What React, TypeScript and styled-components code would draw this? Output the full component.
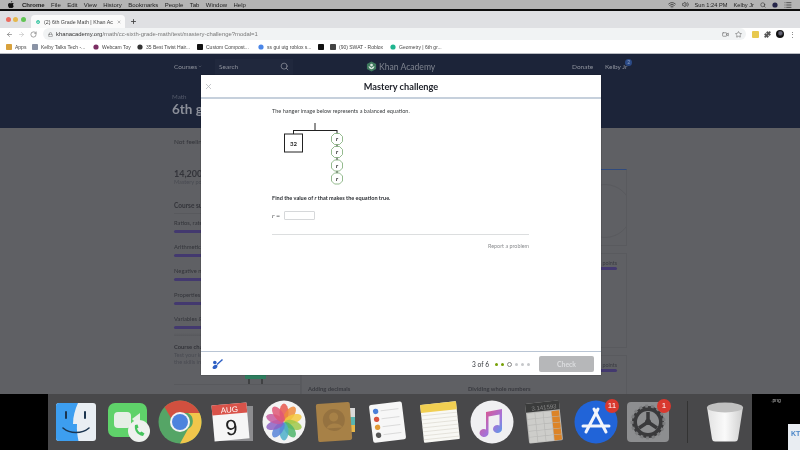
import styled, { createGlobalStyle } from 'styled-components'
import { ArrowLeft, ArrowRight, RotateCw, Lock, Plus, X, Search, Star, Puzzle, Wifi, Volume2, Video, ChevronDown, List } from 'lucide-react'

const GlobalStyle = createGlobalStyle`
  html, body { margin: 0; padding: 0; background: #000; }
  * { box-sizing: border-box; }
`

const Screen = styled.div`
  position: relative;
  width: 800px;
  height: 450px;
  overflow: hidden;
  display: flex;
  flex-direction: column;
  font-family: Lato, 'Liberation Sans', sans-serif;
  filter: blur(0.45px);
`

const MenuBar = styled.div`
  height: 9px;
  flex: none;
  background: #b4b4b4;
  display: flex;
  align-items: center;
  padding: 0 8px;
  font: 6px 'Liberation Sans', sans-serif;
  color: #222;
  white-space: nowrap;
`

const AppleMark = styled.svg`
  margin-right: 8px;
  flex: none;
`

const MenuItem = styled.span<{ $bold?: boolean }>`
  margin-right: 6.4px;
  font-weight: ${p => (p.$bold ? 700 : 400)};
`

const MenuRight = styled.div`
  margin-left: auto;
  display: flex;
  align-items: center;
  gap: 6px;
  font-size: 5.7px;
`

const BlackStrip = styled.div`
  height: 2px;
  flex: none;
  background: #0c0c0c;
`

const TabStrip = styled.div`
  height: 17px;
  flex: none;
  background: #dfe0e3;
  display: flex;
  align-items: flex-end;
  padding-left: 5.5px;
`

const Light = styled.i<{ $c: string }>`
  width: 5px;
  height: 5px;
  border-radius: 50%;
  background: ${p => p.$c};
  margin: 0 2.5px 6px 0;
`

const Tab = styled.div`
  width: 94px;
  height: 13px;
  margin-left: 3px;
  background: #fafafa;
  border-radius: 4px 4px 0 0;
  display: flex;
  align-items: center;
  padding: 0 4px 0 5px;
  gap: 4px;
  font: 5.3px 'Liberation Sans', sans-serif;
  color: #444;
  white-space: nowrap;
`

const TabTitle = styled.span`
  flex: 1;
`

const NewTab = styled.div`
  margin: 0 0 3px 4.5px;
  color: #444;
  display: flex;
`

const AddressRow = styled.div`
  height: 12px;
  flex: none;
  background: #fff;
  display: flex;
  align-items: center;
  padding: 0 7px 0 6px;
  color: #666;
`

const NavIcons = styled.div`
  width: 37px;
  display: flex;
  gap: 5px;
  flex: none;
`

const Omnibox = styled.div`
  width: 703px;
  height: 12px;
  flex: none;
  border-radius: 6px;
  background: #f1f3f4;
  display: flex;
  align-items: center;
  padding: 0 4px 0 5px;
  font: 5.9px 'Liberation Sans', sans-serif;
  color: #777;
  gap: 3px;
`

const Domain = styled.b`
  color: #333;
  font-weight: 400;
`

const OmniEnd = styled.div`
  margin-left: auto;
  display: flex;
  align-items: center;
  gap: 6px;
  color: #666;
`

const ToolIcons = styled.div`
  display: flex;
  align-items: center;
  margin-left: 6px;
  gap: 5px;
  color: #555;
`

const Extension = styled.i`
  width: 7px;
  height: 7px;
  border-radius: 1px;
  background: #e8c94f;
`

const Avatar = styled.i`
  width: 8px;
  height: 8px;
  border-radius: 50%;
  background: radial-gradient(circle at 55% 40%, #667 0 20%, #111 45%);
`

const Kebab = styled.span`
  font: 7px 'Liberation Sans', sans-serif;
  line-height: 7px;
  color: #666;
`

const Bookmarks = styled.div`
  height: 14px;
  flex: none;
  background: #fff;
  border-bottom: 1px solid #b9bcc2;
  display: flex;
  align-items: center;
  padding-left: 6px;
  font: 5px 'Liberation Sans', sans-serif;
  color: #444;
  white-space: nowrap;
`

const Bookmark = styled.div<{ $w: number }>`
  width: ${p => p.$w}px;
  flex: none;
  display: flex;
  align-items: center;
  gap: 3px;
`

const Nav = styled.div`
  height: 74px;
  flex: none;
  background: #1c2439;
  color: #8e929c;
  padding-left: 174px;
`

const NavRow = styled.div`
  height: 24px;
  display: flex;
  align-items: center;
  font-size: 6.5px;
  padding-top: 1px;
`

const NavLink = styled.span<{ $w?: number }>`
  display: flex;
  align-items: center;
  gap: 1px;
  width: ${p => (p.$w ? `${p.$w}px` : 'auto')};
  flex: none;
`

const SearchBox = styled.div`
  width: 78px;
  height: 16px;
  margin-left: 13px;
  flex: none;
  background: #20283d;
  display: flex;
  align-items: center;
  justify-content: space-between;
  padding: 0 4px;
`

const Logo = styled.div`
  margin-left: 73px;
  width: 206px;
  flex: none;
  display: flex;
  align-items: center;
  gap: 2px;
  font-size: 8.6px;
  color: #7f848f;
`

const UserName = styled.span`
  position: relative;
`

const Badge = styled.i`
  position: absolute;
  top: -4px;
  right: -5px;
  width: 7px;
  height: 7px;
  border-radius: 50%;
  background: #2b4a86;
  color: #8ea0c4;
  font: 5px/7px Lato, sans-serif;
  text-align: center;
`

const Subject = styled.div`
  margin: 15px 0 0 -2px;
  font-size: 6.2px;
  color: #565c6c;
`

const CourseTitle = styled.div`
  margin: 1px 0 0 -2px;
  font-size: 13.5px;
  font-weight: 700;
  color: #8b8f99;
`

const Content = styled.div`
  height: 266px;
  flex: none;
  background: #5f6064;
  padding-left: 174px;
  display: flex;
  overflow: hidden;
  color: #33343a;
  font-size: 5.8px;
`

const Sidebar = styled.div`
  width: 126px;
  flex: none;
  padding-top: 10px;
`

const Ready = styled.div`
  font-size: 6.4px;
  height: 31px;
`

const Points = styled.div`
  font-size: 9px;
  font-weight: 700;
  line-height: 9px;
`

const Muted = styled.div`
  color: #494b52;
  font-size: 5.6px;
  line-height: 7.4px;
`

const SummaryTitle = styled.div`
  margin-top: 17px;
  font-size: 6.5px;
  font-weight: 700;
  padding-bottom: 4px;
  border-bottom: 1px solid #58595d;
`

const UnitRow = styled.div`
  height: 24px;
  padding-top: 5px;
`

const Bar = styled.div`
  height: 3px;
  margin-top: 3.5px;
  border-radius: 2px;
  background: #43396f;
`

const Fade = styled.div`
  height: 3px;
  margin: -1px 0 6.5px;
  background: linear-gradient(#5f6064, #57585c);
`

const ChallengeTitle = styled.div`
  font-weight: 700;
  font-size: 5.8px;
  margin-bottom: 1px;
`

const Trophy = styled.div`
  margin: 9px 0 0 71px;
  display: flex;
`

const SidebarEnd = styled.div`
  border-top: 1px solid #58595d;
`

const Main = styled.div`
  width: 327px;
  flex: none;
  padding-top: 41px;
  border-left: 1px solid #58595d;
`

const Card = styled.div<{ $h: number; $top?: boolean }>`
  height: ${p => p.$h}px;
  border: 1px solid #595a5e;
  border-top: ${p => (p.$top ? '1px solid #2f4a7d' : '1px solid #595a5e')};
  margin-bottom: 7px;
  padding-right: 9px;
  position: relative;
  overflow: hidden;
`

const Dial = styled.i`
  position: absolute;
  right: -6px;
  top: 14px;
  width: 54px;
  height: 54px;
  border-radius: 50%;
  border: 1px solid #595a5e;
`

const PointsLine = styled.div`
  text-align: right;
  margin-top: 6px;
  font-size: 5.4px;
  color: #3a3b42;
`

const PointsBar = styled.div`
  height: 3px;
  margin-top: 1px;
  border-radius: 2px;
  background: #43396f;
`

const LessonRow = styled.div`
  display: grid;
  grid-template-columns: 160px 1fr;
  margin-top: 13px;
  padding-left: 6px;
  font-weight: 700;
  font-size: 5.8px;
  color: #38393f;
`

const Desktop = styled.div`
  flex: 1;
  min-height: 0;
  background: #000;
  display: flex;
`

const DesktopSide = styled.div`
  flex: 1;
  position: relative;
  overflow: hidden;
  color: #bbb;
  font: 5px 'Liberation Sans', sans-serif;
  text-align: center;
  padding-top: 3px;
`

const DocIcon = styled.div`
  position: absolute;
  left: 36px;
  top: 30px;
  width: 30px;
  height: 40px;
  background: #e9edf2;
  clip-path: polygon(0 0, 24px 0, 30px 6px, 100% 100%, 0 100%);
  color: #4a86c8;
  font: 700 7px 'Liberation Sans', sans-serif;
  text-align: left;
  padding: 6px 0 0 3px;
`

const Dock = styled.div`
  width: 704px;
  flex: none;
  background: #48484a;
  display: flex;
  align-items: center;
  padding-left: 6px;
  gap: 8px;
`

const DockIcon = styled.div`
  position: relative;
  width: 44px;
  height: 44px;
  flex: none;
`

const DockBadge = styled.span`
  position: absolute;
  top: -1px;
  right: -1px;
  width: 14px;
  height: 14px;
  border-radius: 50%;
  background: #d8382e;
  color: #fff;
  font: 8px/14px 'Liberation Sans', sans-serif;
  text-align: center;
`

const DockDivider = styled.i`
  width: 1px;
  height: 42px;
  margin: 0 7px 0 9px;
  background: #333;
  flex: none;
`

const Modal = styled.div`
  position: absolute;
  left: 201px;
  top: 75px;
  width: 400px;
  height: 300px;
  background: #fff;
  display: flex;
  flex-direction: column;
  box-shadow: 0 0 1px rgba(0, 0, 0, 0.6);
`

const ModalHeader = styled.div`
  height: 24px;
  flex: none;
  position: relative;
  display: flex;
  align-items: center;
  justify-content: center;
  border-bottom: 2px solid #c6d0dc;
  padding-top: 1px;
  font-size: 9.2px;
  font-weight: 700;
  color: #21242c;
`

const CloseButton = styled.div`
  position: absolute;
  left: 3px;
  top: 7px;
  display: flex;
  color: #b3b5b9;
`

const ModalBody = styled.div`
  flex: 1;
  padding: 9px 72px 0 71px;
  font-size: 5.55px;
  line-height: 7px;
  color: #3b3e40;
`

const Hanger = styled.svg`
  display: block;
  margin-top: 8px;
`

const FindText = styled.div`
  margin-top: 7.5px;
  font-weight: 700;
  color: #2b2e33;
`

const AnswerRow = styled.div`
  margin-top: 9px;
  display: flex;
  align-items: center;
  gap: 4px;
  font-family: 'Liberation Serif', serif;
  font-size: 6.5px;
`

const AnswerInput = styled.div`
  width: 31px;
  height: 9px;
  border: 1px solid #d6d8da;
  border-radius: 1px;
  background: #fff;
`

const Rule = styled.div`
  margin-top: 14.5px;
  border-top: 1px solid #dcdedf;
`

const Report = styled.div`
  margin-top: 8px;
  text-align: right;
  font-size: 5.4px;
  color: #8b8d90;
`

const ModalFooter = styled.div`
  height: 24px;
  flex: none;
  border-top: 1.5px solid #b9c5d4;
  display: flex;
  align-items: center;
  padding: 1px 7px 0 11px;
  font-size: 6.6px;
  color: #33363b;
`

const Progress = styled.div`
  margin-left: auto;
  display: flex;
  align-items: center;
`

const Dots = styled.div`
  display: flex;
  align-items: center;
  gap: 3px;
  margin: 0 9.5px 0 5.5px;
`

const Dot = styled.i<{ $kind: 'done' | 'now' | 'todo' }>`
  width: ${p => (p.$kind === 'now' ? 5 : 3)}px;
  height: ${p => (p.$kind === 'now' ? 5 : 3)}px;
  border-radius: 50%;
  background: ${p => (p.$kind === 'done' ? '#76a005' : p.$kind === 'now' ? '#fff' : '#c6c8cb')};
  border: ${p => (p.$kind === 'now' ? '1px solid #888' : 'none')};
`

const CheckButton = styled.div`
  width: 55px;
  height: 16px;
  border-radius: 2px;
  background: #b6b7b9;
  color: #dcdddf;
  font-size: 6.8px;
  font-weight: 700;
  display: flex;
  align-items: center;
  justify-content: center;
`

const KhanLeaf = ({ size, c = '#14bf96' }: { size: number; c?: string }) => (
  <svg width={size} height={size} viewBox="0 0 12 12">
    <path d="M6 .5 11 3.2v5.6L6 11.5 1 8.8V3.2z" fill={c} />
    <circle cx="6" cy="4.4" r="1.5" fill="#d9e6df" />
    <path d="M2.8 5.4C3 8 4.6 9 6 9s3-1 3.2-3.6C7.8 6 6.6 6.6 6 7.6 5.4 6.6 4.2 6 2.8 5.4z" fill="#d9e6df" />
  </svg>
)

const Fav = ({ c, shape = 'square' }: { c: string; shape?: 'square' | 'round' }) => (
  <svg width="6" height="6" viewBox="0 0 6 6">
    {shape === 'round' ? <circle cx="3" cy="3" r="2.6" fill={c} /> : <rect width="6" height="6" rx="0.8" fill={c} />}
  </svg>
)

const FinderIcon = () => (
  <svg width="44" height="44" viewBox="0 0 44 44">
    <rect x="2" y="3" width="40" height="38" rx="3" fill="#e9eef3" />
    <path d="M5 3h19c-3 7-5 13-5 21h4c-.5 6 .5 12 1.5 17H5a3 3 0 0 1-3-3V6a3 3 0 0 1 3-3z" fill="#3d9ef0" />
    <path d="M12 12v6M31 12v6" stroke="#1b3550" strokeWidth="2" strokeLinecap="round" />
    <path d="M9 28c7 6 19 6 26 0" stroke="#1b3550" strokeWidth="1.6" fill="none" strokeLinecap="round" />
  </svg>
)

const FaceTimeIcon = () => (
  <svg width="44" height="44" viewBox="0 0 44 44">
    <rect x="2" y="3" width="39" height="34" rx="7" fill="#5fd26a" />
    <rect x="8" y="12" width="17" height="16" rx="4" fill="#e6efe6" />
    <path d="M26 19l8-6v14z" fill="#e6efe6" />
    <circle cx="33" cy="31" r="11" fill="#eef1ee" />
    <path d="M29 25c-1 5 2 10 8 11l1.500-2.500-3-2-1.500 1c-1.500-1-2.500-2.500-3-4l1.500-1-1-3z" fill="#44c35c" />
  </svg>
)

const ChromeIcon = () => (
  <svg width="44" height="44" viewBox="0 0 44 44">
    <circle cx="22" cy="22" r="21.500" fill="#55a566" />
    <path d="M22 .5A21.500 21.500 0 0 1 41.500 13H22a9 9 0 0 0-8.500 6L6.500 7A21.500 21.500 0 0 1 22 .5z" fill="#d1503f" />
    <path d="M41.500 13A21.500 21.500 0 0 1 22 43.500L30 29a9 9 0 0 0 0-16z" fill="#f1c64b" />
    <circle cx="22" cy="22" r="10" fill="#f3f3f3" />
    <circle cx="22" cy="22" r="8" fill="#4d83dd" />
  </svg>
)

const CalendarIcon = () => (
  <svg width="44" height="44" viewBox="0 0 44 44">
    <rect x="8" y="6" width="35" height="35" fill="#8d8d90" />
    <g transform="rotate(-5 20 22)">
      <rect x="3" y="4" width="35" height="36" fill="#f6f6f6" />
      <rect x="3" y="4" width="35" height="10" fill="#d9534a" />
      <text x="20.500" y="12.500" textAnchor="middle" fontSize="8" fill="#fff" fontFamily="Liberation Sans">AUG</text>
      <text x="21" y="35" textAnchor="middle" fontSize="22" fill="#222" fontFamily="Liberation Sans">9</text>
    </g>
  </svg>
)

const PhotosIcon = () => {
  const petals = ['#e8574b', '#ef8b3c', '#f3c83e', '#9dc84a', '#4fb56b', '#4dafc9', '#5784d8', '#8c62c4', '#c65aa0', '#df5775']
  return (
    <svg width="44" height="44" viewBox="0 0 44 44">
      <circle cx="22" cy="22" r="21.500" fill="#f3f3f3" />
      {petals.map((c, i) => (
        <ellipse key={c} cx="22" cy="12.500" rx="4.500" ry="9" fill={c} opacity="0.85" transform={`rotate(${i * 36} 22 22)`} />
      ))}
    </svg>
  )
}

const ContactsIcon = () => (
  <svg width="44" height="44" viewBox="0 0 44 44">
    <rect x="36" y="8" width="5" height="9" fill="#d9d9d9" />
    <rect x="36" y="17" width="5" height="8" fill="#58b5b0" />
    <rect x="36" y="25" width="5" height="7" fill="#e6b64a" />
    <g transform="rotate(-4 20 22)">
      <rect x="3" y="3" width="34" height="38" rx="2" fill="#a78147" />
      <circle cx="20" cy="20" r="11" fill="#957240" />
      <circle cx="20" cy="17" r="4.500" fill="#a78147" />
      <path d="M12 28c2-6 14-6 16 0" fill="#a78147" />
    </g>
  </svg>
)

const RemindersIcon = () => (
  <svg width="44" height="44" viewBox="0 0 44 44">
    <g transform="rotate(-7 22 22)">
      <rect x="5" y="3" width="33" height="38" rx="2" fill="#f7f7f7" />
      {['#4a7fd9', '#d9533f', '#e19a35', '#555'].map((c, i) => (
        <g key={c}>
          <circle cx="11" cy={10 + i * 8} r="2.700" fill={c} />
          <path d={`M16 ${10 + i * 8}h18`} stroke="#cfcfcf" strokeWidth="0.7" />
        </g>
      ))}
    </g>
  </svg>
)

const NotesIcon = () => (
  <svg width="44" height="44" viewBox="0 0 44 44">
    <g transform="rotate(-6 22 22)">
      <rect x="4" y="3" width="36" height="38" rx="1" fill="#f8f8f4" />
      <rect x="4" y="3" width="36" height="8" fill="#f1cf52" />
      {[14, 18, 22, 26, 30, 34, 38].map(y => (
        <path key={y} d={`M4 ${y}h36`} stroke="#d8d6cc" strokeWidth="0.6" />
      ))}
    </g>
  </svg>
)

const MusicIcon = () => (
  <svg width="44" height="44" viewBox="0 0 44 44">
    <defs>
      <linearGradient id="note" x1="0" y1="0" x2="1" y2="1">
        <stop offset="0" stopColor="#ee4e77" />
        <stop offset="0.6" stopColor="#a672d8" />
        <stop offset="1" stopColor="#4aa6ec" />
      </linearGradient>
    </defs>
    <circle cx="22" cy="22" r="21.500" fill="#f0f0f2" />
    <path d="M16 12l16-3v20a4.500 4 0 1 1-2.500-3.600V14.500l-11 2V33a4.500 4 0 1 1-2.500-3.600z" fill="url(#note)" />
  </svg>
)

const CalculatorIcon = () => {
  const keys = Array.from({ length: 20 }, (_, i) => i)
  return (
    <svg width="44" height="44" viewBox="0 0 44 44">
      <g transform="rotate(-6 22 22)">
        <rect x="5" y="2" width="34" height="40" rx="1.500" fill="#b8b8b6" />
        <rect x="5" y="2" width="34" height="9" fill="#3a3b3b" />
        <text x="36" y="9.500" textAnchor="end" fontSize="6" fill="#888" fontFamily="Liberation Sans">3.141593</text>
        {keys.map(i => (
          <rect
            key={i}
            x={6 + (i % 4) * 8.200}
            y={12 + Math.floor(i / 4) * 6}
            width="7.500"
            height="5.400"
            fill={i % 4 === 3 ? '#dc8428' : '#cdcdca'}
          />
        ))}
      </g>
    </svg>
  )
}

const AppStoreIcon = () => (
  <svg width="44" height="44" viewBox="0 0 44 44">
    <circle cx="22" cy="22" r="21.500" fill="#2164d8" />
    <path d="M24 9L12 32M20 9l12 23M9 26h26" stroke="#f2f5fb" strokeWidth="3" strokeLinecap="round" fill="none" />
  </svg>
)

const PrefsIcon = () => (
  <svg width="44" height="44" viewBox="0 0 44 44">
    <rect x="1" y="2" width="42" height="40" rx="4" fill="#8d8e90" />
    <circle cx="22" cy="22" r="16" fill="#39393b" />
    <circle cx="22" cy="22" r="16" fill="none" stroke="#7c7d7f" strokeWidth="3" strokeDasharray="3 3" />
    <circle cx="22" cy="22" r="11" fill="#8d8e90" />
    <path d="M22 22V12M22 22l-9 6M22 22l9 6" stroke="#39393b" strokeWidth="3.500" />
    <circle cx="22" cy="22" r="3" fill="#39393b" />
  </svg>
)

const TrashIcon = () => (
  <svg width="44" height="44" viewBox="0 0 44 44">
    <defs>
      <linearGradient id="bin" x1="0" y1="0" x2="1" y2="0">
        <stop offset="0" stopColor="#e2e2e2" />
        <stop offset="0.5" stopColor="#fafafa" />
        <stop offset="1" stopColor="#cfcfcf" />
      </linearGradient>
    </defs>
    <path d="M4 7h36l-5 32a3 3 0 0 1-3 2.500H12A3 3 0 0 1 9 39z" fill="url(#bin)" />
    <ellipse cx="22" cy="7.500" rx="18" ry="5" fill="#c0c0c0" />
  </svg>
)

const menuItems = ['File', 'Edit', 'View', 'History', 'Bookmarks', 'People', 'Tab', 'Window', 'Help']

const bookmarks = [
  { w: 26, c: '#d8a13c', label: 'Apps' },
  { w: 61, c: '#8a93a5', label: 'Kelby Talks Tech -...' },
  { w: 44, c: '#7b2e63', label: 'Webcam Toy', round: true },
  { w: 60, c: '#333', label: '35 Best Twist Hair...', round: true },
  { w: 61, c: '#111', label: 'Custom Compost...' },
  { w: 60, c: '#4a86e8', label: 'ss gui utg roblox s...', round: true },
  { w: 12, c: '#111', label: '' },
  { w: 60, c: '#444', label: '(90) SWAT - Roblox' },
  { w: 60, c: '#1fb58f', label: 'Geometry | 6th gr...', round: true },
]

const units = ['Ratios, rates, & percentages', 'Arithmetic with rational numbers', 'Negative numbers', 'Properties of numbers', 'Variables & expressions']

export default function App() {
  return (
    <Screen>
      <GlobalStyle />
      <MenuBar>
        <AppleMark width="6" height="7" viewBox="0 0 12 14">
          <path d="M8.500 0c.1 1.500-1.200 3-2.700 2.900C5.700 1.500 7 .1 8.500 0zM11.500 10c-.8 2-2 4-3.300 4-1 0-1.300-.6-2.400-.6S4.300 14 3.400 14C1.800 14 0 11 0 8.200 0 5.500 1.700 4 3.300 4c1 0 1.900.7 2.500.7S7.400 3.900 8.700 4c.6 0 2 .2 2.800 1.500-2.300 1.400-1.900 3.900 0 4.500z" fill="#111" />
        </AppleMark>
        <MenuItem $bold>Chrome</MenuItem>
        {menuItems.map(m => (
          <MenuItem key={m}>{m}</MenuItem>
        ))}
        <MenuRight>
          <Wifi size={8} />
          <Volume2 size={7} />
          <span>Sun 1:24 PM</span>
          <span>Kelby Jr</span>
          <Search size={6} />
          <Fav c="#26264a" shape="round" />
          <List size={8} />
        </MenuRight>
      </MenuBar>
      <BlackStrip />
      <TabStrip>
        <Light $c="#ec6a5e" />
        <Light $c="#e5b84b" />
        <Light $c="#61c454" />
        <Tab>
          <KhanLeaf size={6} />
          <TabTitle>(2) 6th Grade Math | Khan Ac</TabTitle>
          <X size={6} />
        </Tab>
        <NewTab>
          <Plus size={7} strokeWidth={3} />
        </NewTab>
      </TabStrip>
      <AddressRow>
        <NavIcons>
          <ArrowLeft size={7} />
          <ArrowRight size={7} color="#bbb" />
          <RotateCw size={7} />
        </NavIcons>
        <Omnibox>
          <Lock size={5} color="#555" />
          <span>
            <Domain>khanacademy.org</Domain>/math/cc-sixth-grade-math/test/mastery-challenge?modal=1
          </span>
          <OmniEnd>
            <Video size={7} />
            <Star size={7} />
          </OmniEnd>
        </Omnibox>
        <ToolIcons>
          <Extension />
          <Puzzle size={7} fill="#555" />
          <Avatar />
          <Kebab>⋮</Kebab>
        </ToolIcons>
      </AddressRow>
      <Bookmarks>
        {bookmarks.map((b, i) => (
          <Bookmark key={i} $w={b.w}>
            <Fav c={b.c} shape={b.round ? 'round' : 'square'} />
            {b.label}
          </Bookmark>
        ))}
      </Bookmarks>
      <Nav>
        <NavRow>
          <NavLink $w={28}>
            Courses <ChevronDown size={5} />
          </NavLink>
          <SearchBox>
            Search
            <Search size={9} />
          </SearchBox>
          <Logo>
            <KhanLeaf size={11} c="#3f7a5e" />
            Khan Academy
          </Logo>
          <NavLink $w={33}>Donate</NavLink>
          <UserName>
            Kelby Jr
            <Badge>2</Badge>
          </UserName>
        </NavRow>
        <Subject>Math</Subject>
        <CourseTitle>6th grade</CourseTitle>
      </Nav>
      <Content>
        <Sidebar>
          <Ready>Not feeling ready?</Ready>
          <Points>14,200</Points>
          <Muted>Mastery points</Muted>
          <SummaryTitle>Course summary</SummaryTitle>
          {units.map(u => (
            <UnitRow key={u}>
              {u}
              <Bar />
            </UnitRow>
          ))}
          <Fade />
          <ChallengeTitle>Course challenge</ChallengeTitle>
          <Muted>Test your knowledge of</Muted>
          <Muted>the skills in this course.</Muted>
          <Trophy>
            <svg width="22" height="9" viewBox="0 0 22 9">
              <path d="M0 0h21v3a1 1 0 0 1-1 1H1a1 1 0 0 1-1-1z" fill="#2e7d5e" />
              <path d="M4 4v5M17 4v5" stroke="#222" strokeWidth="1" />
            </svg>
          </Trophy>
          <SidebarEnd />
        </Sidebar>
        <Main>
          <Card $h={77} $top>
            <Dial />
          </Card>
          <Card $h={95}>
            <PointsLine>points</PointsLine>
            <PointsBar />
          </Card>
          <Card $h={60}>
            <PointsLine>points</PointsLine>
            <PointsBar />
            <LessonRow>
              <span>Adding decimals</span>
              <span>Dividing whole numbers</span>
            </LessonRow>
          </Card>
        </Main>
      </Content>
      <Desktop>
        <DesktopSide />
        <Dock>
          <DockIcon><FinderIcon /></DockIcon>
          <DockIcon><FaceTimeIcon /></DockIcon>
          <DockIcon><ChromeIcon /></DockIcon>
          <DockIcon><CalendarIcon /></DockIcon>
          <DockIcon><PhotosIcon /></DockIcon>
          <DockIcon><ContactsIcon /></DockIcon>
          <DockIcon><RemindersIcon /></DockIcon>
          <DockIcon><NotesIcon /></DockIcon>
          <DockIcon><MusicIcon /></DockIcon>
          <DockIcon><CalculatorIcon /></DockIcon>
          <DockIcon>
            <AppStoreIcon />
            <DockBadge>11</DockBadge>
          </DockIcon>
          <DockIcon>
            <PrefsIcon />
            <DockBadge>1</DockBadge>
          </DockIcon>
          <DockDivider />
          <DockIcon><TrashIcon /></DockIcon>
        </Dock>
        <DesktopSide>
          .png
          <DocIcon>KT</DocIcon>
        </DesktopSide>
      </Desktop>
      <Modal>
        <ModalHeader>
          <CloseButton>
            <X size={9} />
          </CloseButton>
          Mastery challenge
        </ModalHeader>
        <ModalBody>
          The hanger image below represents a balanced equation.
          <Hanger width="80" height="64" viewBox="0 0 80 64">
            <g fill="none" stroke="#222">
              <path d="M43 0v7M21.500 7.500H65M21.500 7v4M65 7v4" strokeWidth="1" />
              <rect x="12.500" y="11" width="18" height="18" strokeWidth="1" />
              <path d="M65 20v4M65 33v4M65 46v4" strokeWidth="1" />
            </g>
            <text x="21.500" y="22.500" textAnchor="middle" fontSize="6" fontWeight="700" fill="#222" fontFamily="Lato">32</text>
            {[16, 29, 42.5, 55.5].map(y => (
              <g key={y}>
                <path
                  d={`M${65 - 2.500} ${y - 5.500}h5l3 3v5l-3 3h-5l-3-3v-5z`}
                  fill="#fff"
                  stroke="#7aaa72"
                  strokeWidth="0.800"
                />
                <text x="65" y={y + 2} textAnchor="middle" fontSize="5.500" fontStyle="italic" fontWeight="700" fill="#222" fontFamily="Liberation Serif">r</text>
              </g>
            ))}
          </Hanger>
          <FindText>
            Find the value of <i>r</i> that makes the equation true.
          </FindText>
          <AnswerRow>
            <span>
              <i>r</i> =
            </span>
            <AnswerInput />
          </AnswerRow>
          <Rule />
          <Report>Report a problem</Report>
        </ModalBody>
        <ModalFooter>
          <svg width="11" height="10" viewBox="0 0 11 10">
            <path d="M5 5.500l5.500-5" stroke="#2d5fc4" strokeWidth="1.400" />
            <circle cx="2.800" cy="3.500" r="1.800" fill="#2d5fc4" />
            <path d="M.5 8.500c1-3 4-3.500 5-2 .2 2-1.500 3.500-2.800 3.500S.5 9.500.5 8.500z" fill="#2d5fc4" />
          </svg>
          <Progress>
            3 of 6
            <Dots>
              <Dot $kind="done" />
              <Dot $kind="done" />
              <Dot $kind="now" />
              <Dot $kind="todo" />
              <Dot $kind="todo" />
              <Dot $kind="todo" />
            </Dots>
            <CheckButton>Check</CheckButton>
          </Progress>
        </ModalFooter>
      </Modal>
    </Screen>
  )
}
